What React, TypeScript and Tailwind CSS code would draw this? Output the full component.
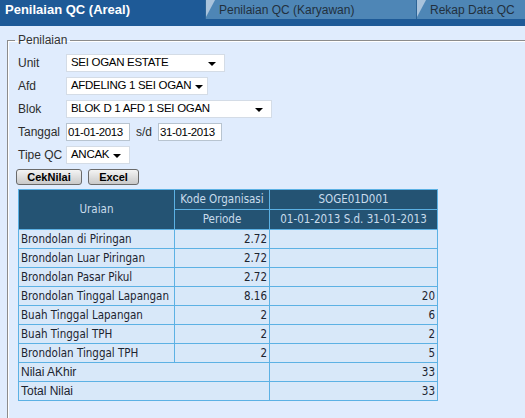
import React from "react";

const rows: [string, string, string][] = [
  ["Brondolan di Piringan", "2.72", ""],
  ["Brondolan Luar Piringan", "2.72", ""],
  ["Brondolan Pasar Pikul", "2.72", ""],
  ["Brondolan Tinggal Lapangan", "8.16", "20"],
  ["Buah Tinggal Lapangan", "2", "6"],
  ["Buah Tinggal TPH", "2", "2"],
  ["Brondolan Tinggal TPH", "2", "5"],
];

function Select({ value, width }: { value: string; width: string }) {
  return (
    <div className={`${width} shrink-0 h-[18px] bg-white border border-[#d4dce6] flex items-center justify-between pl-[4px] pr-[8px] text-[11.5px] tracking-[-0.3px] text-black whitespace-nowrap font-['Liberation_Sans',sans-serif]`}>
      <span>{value}</span>
      <svg width="8" height="5" viewBox="0 0 8 5" className="mt-[3px] ml-[4px] shrink-0">
        <polygon points="0,0 8,0 4,4" fill="#000" />
      </svg>
    </div>
  );
}

function DateBox({ value }: { value: string }) {
  return (
    <div className="w-[64px] shrink-0 h-[18px] bg-white border border-[#b8c4d0] pl-[1px] leading-[16px] text-[11.5px] tracking-[-0.4px] text-black whitespace-nowrap overflow-hidden">
      {value}
    </div>
  );
}

function Tab({ label, width }: { label: string; width: string }) {
  return (
    <div className={`${width} relative h-[19px] bg-[#4e86b6] border-l border-[#2d6496] flex items-center pl-[13px] text-[12px] text-[#22303d] font-['Liberation_Sans',sans-serif]`}>
      <svg width="10" height="19" viewBox="0 0 10 19" className="absolute left-0 top-0">
        <polygon points="0,0 9,0 0,17" fill="#a9c3dc" />
      </svg>
      <span className="relative">{label}</span>
    </div>
  );
}

export default function App() {
  const cell = "border border-[#5cb1e4] px-[2px] h-[19px] leading-[17px]";
  return (
    <div className="w-[525px] h-[418px] overflow-hidden bg-[#e0ecfd] font-['DejaVu_Sans_Condensed','Liberation_Sans',sans-serif]">
      <div className="flex h-[19px]">
        <div className="w-[205px] h-[19px] bg-[#1e5a97] text-white font-bold text-[13px] pl-[5px] flex items-center font-['Liberation_Sans',sans-serif]">
          Penilaian QC (Areal)
        </div>
        <Tab label="Penilaian QC (Karyawan)" width="w-[211px]" />
        <Tab label="Rekap Data QC" width="flex-1" />
      </div>
      <div className="h-[7px] bg-[#1e5a97]" />

      <fieldset className="ml-[7px] mt-[5px] w-[560px] border border-[#8c8c8c] shadow-[inset_1px_1px_0_#ffffff] pl-[10px] pt-[1px] pb-[20px]">
        <legend className="ml-[-3px] px-[3px] text-[12px] text-[#333] font-['Liberation_Sans',sans-serif]">Penilaian</legend>
        <div className="flex flex-col gap-[5px] text-[12px] text-[#2c2c2c] font-['Liberation_Sans',sans-serif]">
          <div className="flex items-center mt-[4px]">
            <span className="w-[48px] shrink-0">Unit</span>
            <Select value="SEI OGAN ESTATE" width="w-[159px]" />
          </div>
          <div className="flex items-center">
            <span className="w-[48px] shrink-0">Afd</span>
            <Select value="AFDELING 1 SEI OGAN" width="w-[142px]" />
          </div>
          <div className="flex items-center">
            <span className="w-[48px] shrink-0">Blok</span>
            <Select value="BLOK D 1 AFD 1 SEI OGAN" width="w-[206px]" />
          </div>
          <div className="flex items-center">
            <span className="w-[48px] shrink-0">Tanggal</span>
            <DateBox value="01-01-2013" />
            <span className="mx-[6px]">s/d</span>
            <DateBox value="31-01-2013" />
          </div>
          <div className="flex items-center">
            <span className="w-[48px] shrink-0">Tipe QC</span>
            <Select value="ANCAK" width="w-[64px]" />
          </div>
          <div className="flex items-center gap-[6px] ml-[-2px]">
            <button className="w-[66px] h-[16px] rounded-[3px] border border-[#6a6a6a] bg-gradient-to-b from-[#f4f4f4] to-[#c9c9c9] text-[11px] font-bold text-black leading-[14px]">CekNilai</button>
            <button className="w-[51px] h-[16px] rounded-[3px] border border-[#6a6a6a] bg-gradient-to-b from-[#f4f4f4] to-[#c9c9c9] text-[11px] font-bold text-black leading-[14px]">Excel</button>
          </div>
        </div>

        <table className="mt-[4px] border-collapse text-[11.5px] text-[#1c2430] w-[419px] table-fixed">
          <colgroup>
            <col className="w-[156px]" />
            <col className="w-[95px]" />
            <col className="w-[168px]" />
          </colgroup>
          <thead className="bg-[#245373] text-[#c9dcec]">
            <tr>
              <th rowSpan={2} className="border border-[#5cb1e4] font-normal">Uraian</th>
              <th className="border border-[#5cb1e4] font-normal h-[20px]">Kode Organisasi</th>
              <th className="border border-[#5cb1e4] font-normal h-[20px]">SOGE01D001</th>
            </tr>
            <tr>
              <th className="border border-[#5cb1e4] font-normal h-[20px]">Periode</th>
              <th className="border border-[#5cb1e4] font-normal h-[20px]">01-01-2013 S.d. 31-01-2013</th>
            </tr>
          </thead>
          <tbody className="bg-[#d8e8f9]">
            {rows.map(([a, b, c]) => (
              <tr key={a}>
                <td className={`${cell} whitespace-nowrap`}>{a}</td>
                <td className={`${cell} text-right`}>{b}</td>
                <td className={`${cell} text-right`}>{c}</td>
              </tr>
            ))}
            <tr>
              <td colSpan={2} className={`${cell} text-[12px] font-['Liberation_Sans',sans-serif]`}>Nilai AKhir</td>
              <td className={`${cell} text-right`}>33</td>
            </tr>
            <tr>
              <td colSpan={2} className={`${cell} text-[12px] font-['Liberation_Sans',sans-serif]`}>Total Nilai</td>
              <td className={`${cell} text-right`}>33</td>
            </tr>
          </tbody>
        </table>
      </fieldset>
    </div>
  );
}
